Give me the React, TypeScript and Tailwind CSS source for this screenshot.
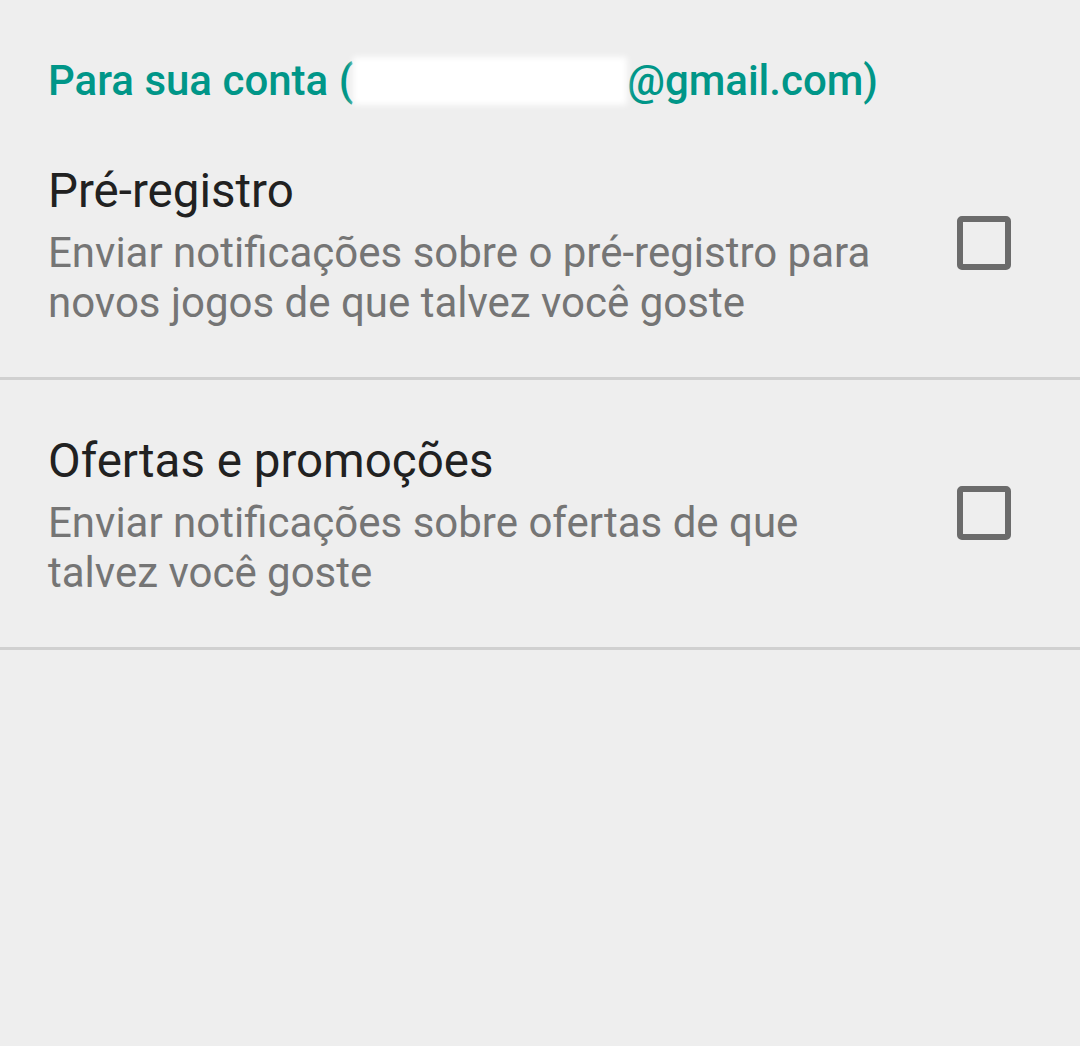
const rows = [
  {
    title: "Pré-registro",
    text: "Enviar notificações sobre o pré-registro para novos jogos de que talvez você goste",
  },
  {
    title: "Ofertas e promoções",
    text: "Enviar notificações sobre ofertas de que talvez você goste",
  },
];

export default function App() {
  return (
    <div className="min-h-[1046px] bg-[#eeeeee] font-['Roboto',sans-serif]">
      <div className="px-12 pt-[57px] pb-[5px]">
        <h2 className="text-[42px] leading-[48px] font-medium text-[#009688] whitespace-nowrap">
          Para sua conta (
          <span className="inline-block w-[274px] h-[48px] align-top bg-white blur-[3px]"></span>
          @gmail.com)
        </h2>
      </div>
      {rows.map((r) => (
        <div key={r.title} className="border-b-[3px] border-[#d0d0d0]">
          <div className="flex items-center pl-12 pr-[69px] pt-[54px] pb-[49px]">
            <div className="flex-1">
              <div className="text-[47.5px] leading-[54px] text-[#212121]">{r.title}</div>
              <div className="mt-[10px] text-[42px] leading-[50px] text-[#757575]">{r.text}</div>
            </div>
            <div className="ml-[57px] mb-[6px] w-[54px] h-[54px] shrink-0 rounded-[5px] border-[6px] border-[#6b6b6b]"></div>
          </div>
        </div>
      ))}
    </div>
  );
}
